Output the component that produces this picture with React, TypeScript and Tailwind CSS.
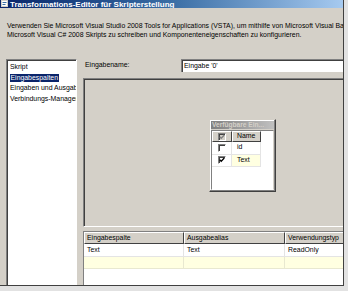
const font = "font-['Liberation_Sans',Arial,sans-serif]";

function Check({ checked, disabled }: { checked?: boolean; disabled?: boolean }) {
  return (
    <span
      className={`inline-flex w-[8px] h-[8px] border border-t-[#808080] border-l-[#808080] border-b-white border-r-white shadow-[inset_1px_1px_0_#404040] items-center justify-center ${disabled ? "bg-[#d4d0c8]" : "bg-white"}`}
    >
      {checked && (
        <svg width="6" height="6" viewBox="0 0 7 7">
          <path d="M0.8 3.2 L2.6 5 L6.2 1.2" fill="none" stroke={disabled ? "#808080" : "#000"} strokeWidth="1.5" />
        </svg>
      )}
    </span>
  );
}

export default function App() {
  return (
    <div className={`w-[348px] h-[291px] bg-[#e2e2e2] overflow-hidden ${font} text-[6.9px] leading-none text-black`}>
      <div className="w-[344px] h-[286px] bg-[#d4d0c8] border-r border-b border-[#404040] flex flex-col overflow-hidden">
        {/* title bar */}
        <div className="h-[8px] shrink-0 bg-linear-to-r from-[#0a246a] via-[#3a6ea5] to-[#a6caf0] flex items-end overflow-hidden">
          <svg width="7" height="7" viewBox="0 0 7 7" className="ml-[1px] mb-[1px] shrink-0">
            <rect x="0.5" y="0.5" width="6" height="6" fill="#fff" stroke="#d4d0c8" />
            <rect x="1.5" y="2" width="4" height="1" fill="#3a6ea5" />
            <rect x="1.5" y="4" width="3" height="1" fill="#3a6ea5" />
          </svg>
          <span className="ml-[2px] text-white font-bold text-[8px] leading-[8px] -mb-[0.5px] whitespace-nowrap">
            Transformations-Editor für Skripterstellung
          </span>
        </div>

        {/* description */}
        <div className="pt-[13px] pl-[7px] whitespace-nowrap leading-[9px]">
          <div>Verwenden Sie Microsoft Visual Studio 2008 Tools for Applications (VSTA), um mithilfe von Microsoft Visual Basic 2008 oder</div>
          <div>Microsoft Visual C# 2008 Skripts zu schreiben und Komponenteneigenschaften zu konfigurieren.</div>
        </div>

        {/* main */}
        <div className="mt-[20px] flex flex-1 min-h-0 pl-[6px]">
          {/* tree */}
          <div className="w-[71px] bg-white border-t border-l border-r border-t-[#808080] border-l-[#808080] border-r-white shadow-[inset_1px_1px_0_#404040] pt-[2px] pl-[3px] overflow-hidden whitespace-nowrap">
            <div className="h-[10.7px] flex items-center">Skript</div>
            <div className="h-[10.7px] flex items-center">
              <span className="bg-[#0a246a] text-white px-[0.5px] h-[8.5px] flex items-center">Eingabespalten</span>
            </div>
            <div className="h-[10.7px] flex items-center">Eingaben und Ausgaben</div>
            <div className="h-[10.7px] flex items-center">Verbindungs-Manager</div>
          </div>

          {/* right */}
          <div className="ml-[6px] flex-1 flex flex-col min-w-0">
            <div className="h-[13px] flex items-center">
              <span className="ml-[2px] w-[96px] shrink-0">Eingabename:</span>
              <div className="flex-1 h-[13px] bg-white border-t border-l border-t-[#808080] border-l-[#808080] shadow-[inset_1px_1px_0_#404040] flex items-center pl-[2px]">
                Eingabe &#39;0&#39;
              </div>
            </div>

            {/* canvas */}
            <div className="mt-[6px] h-[149px] relative border-t border-l border-b border-t-[#808080] border-l-[#808080] border-b-white shadow-[inset_1px_1px_0_#404040]">
              <div className="absolute left-[125px] top-[40px] w-[67px] h-[73px] bg-[#d4d0c8] border border-t-[#d4d0c8] border-l-[#d4d0c8] border-b-[#404040] border-r-[#404040] shadow-[inset_-1px_-1px_0_#808080,inset_1px_1px_0_#fff] p-[1px] flex flex-col">
                <div className="h-[8px] bg-linear-to-r from-[#808080] to-[#c0c0c0] text-[#d4d0c8] font-bold text-[6.6px] flex items-center pl-[1px] whitespace-nowrap overflow-hidden">
                  Verfügbare Ein...
                </div>
                <div className="flex-1 mt-[1px] bg-white border-t border-l border-t-[#808080] border-l-[#808080] border-b border-r border-b-white border-r-[#d4d0c8] flex flex-col">
                  <div className="h-[11px] flex shrink-0">
                    <div className="w-[20px] bg-[#d4d0c8] border border-t-white border-l-white border-b-[#404040] border-r-[#404040] flex items-center justify-center">
                      <Check checked disabled />
                    </div>
                    <div className="w-[29px] bg-[#d4d0c8] border border-t-white border-l-white border-b-[#404040] border-r-[#404040] flex items-center pl-[4px]">
                      Name
                    </div>
                  </div>
                  <div className="h-[12.5px] flex">
                    <div className="w-[20px] border-r border-b border-[#e4e4e4] flex items-center justify-center">
                      <Check />
                    </div>
                    <div className="w-[29px] border-r border-b border-[#e4e4e4] flex items-center pl-[5px]">id</div>
                  </div>
                  <div className="h-[12.5px] flex">
                    <div className="w-[20px] border-r border-b border-[#e4e4e4] flex items-center justify-center">
                      <Check checked />
                    </div>
                    <div className="w-[29px] bg-[#ffffe1] border-r border-b border-[#e4e4e4] flex items-center pl-[5px]">Text</div>
                  </div>
                </div>
              </div>
            </div>

            {/* grid */}
            <div className="mt-[4px] flex-1 bg-white border-t border-l border-t-[#808080] border-l-[#808080] flex flex-col whitespace-nowrap overflow-hidden">
              <div className="h-[12px] flex shrink-0">
                <div className="w-[100px] shrink-0 bg-[#d4d0c8] border border-t-white border-l-white border-b-[#404040] border-r-[#404040] flex items-center pl-[2px]">Eingabespalte</div>
                <div className="w-[101px] shrink-0 bg-[#d4d0c8] border border-t-white border-l-white border-b-[#404040] border-r-[#404040] flex items-center pl-[2px]">Ausgabealias</div>
                <div className="w-[70px] shrink-0 bg-[#d4d0c8] border border-t-white border-l-white border-b-[#404040] border-r-[#404040] flex items-center pl-[2px]">Verwendungstyp</div>
              </div>
              <div className="h-[13px] flex shrink-0">
                <div className="w-[100px] shrink-0 border-r border-b border-[#e4e4e4] flex items-center pl-[3px]">Text</div>
                <div className="w-[101px] shrink-0 border-r border-b border-[#e4e4e4] flex items-center pl-[3px]">Text</div>
                <div className="w-[70px] shrink-0 border-r border-b border-[#e4e4e4] flex items-center pl-[3px]">ReadOnly</div>
              </div>
              <div className="h-[12px] flex shrink-0 bg-[#ffffe1]">
                <div className="w-[100px] shrink-0 border-r border-b border-[#e8e8d0]" />
                <div className="w-[101px] shrink-0 border-r border-b border-[#e8e8d0]" />
                <div className="w-[70px] shrink-0 border-r border-b border-[#e8e8d0]" />
              </div>
            </div>
          </div>
        </div>
      </div>
    </div>
  );
}
